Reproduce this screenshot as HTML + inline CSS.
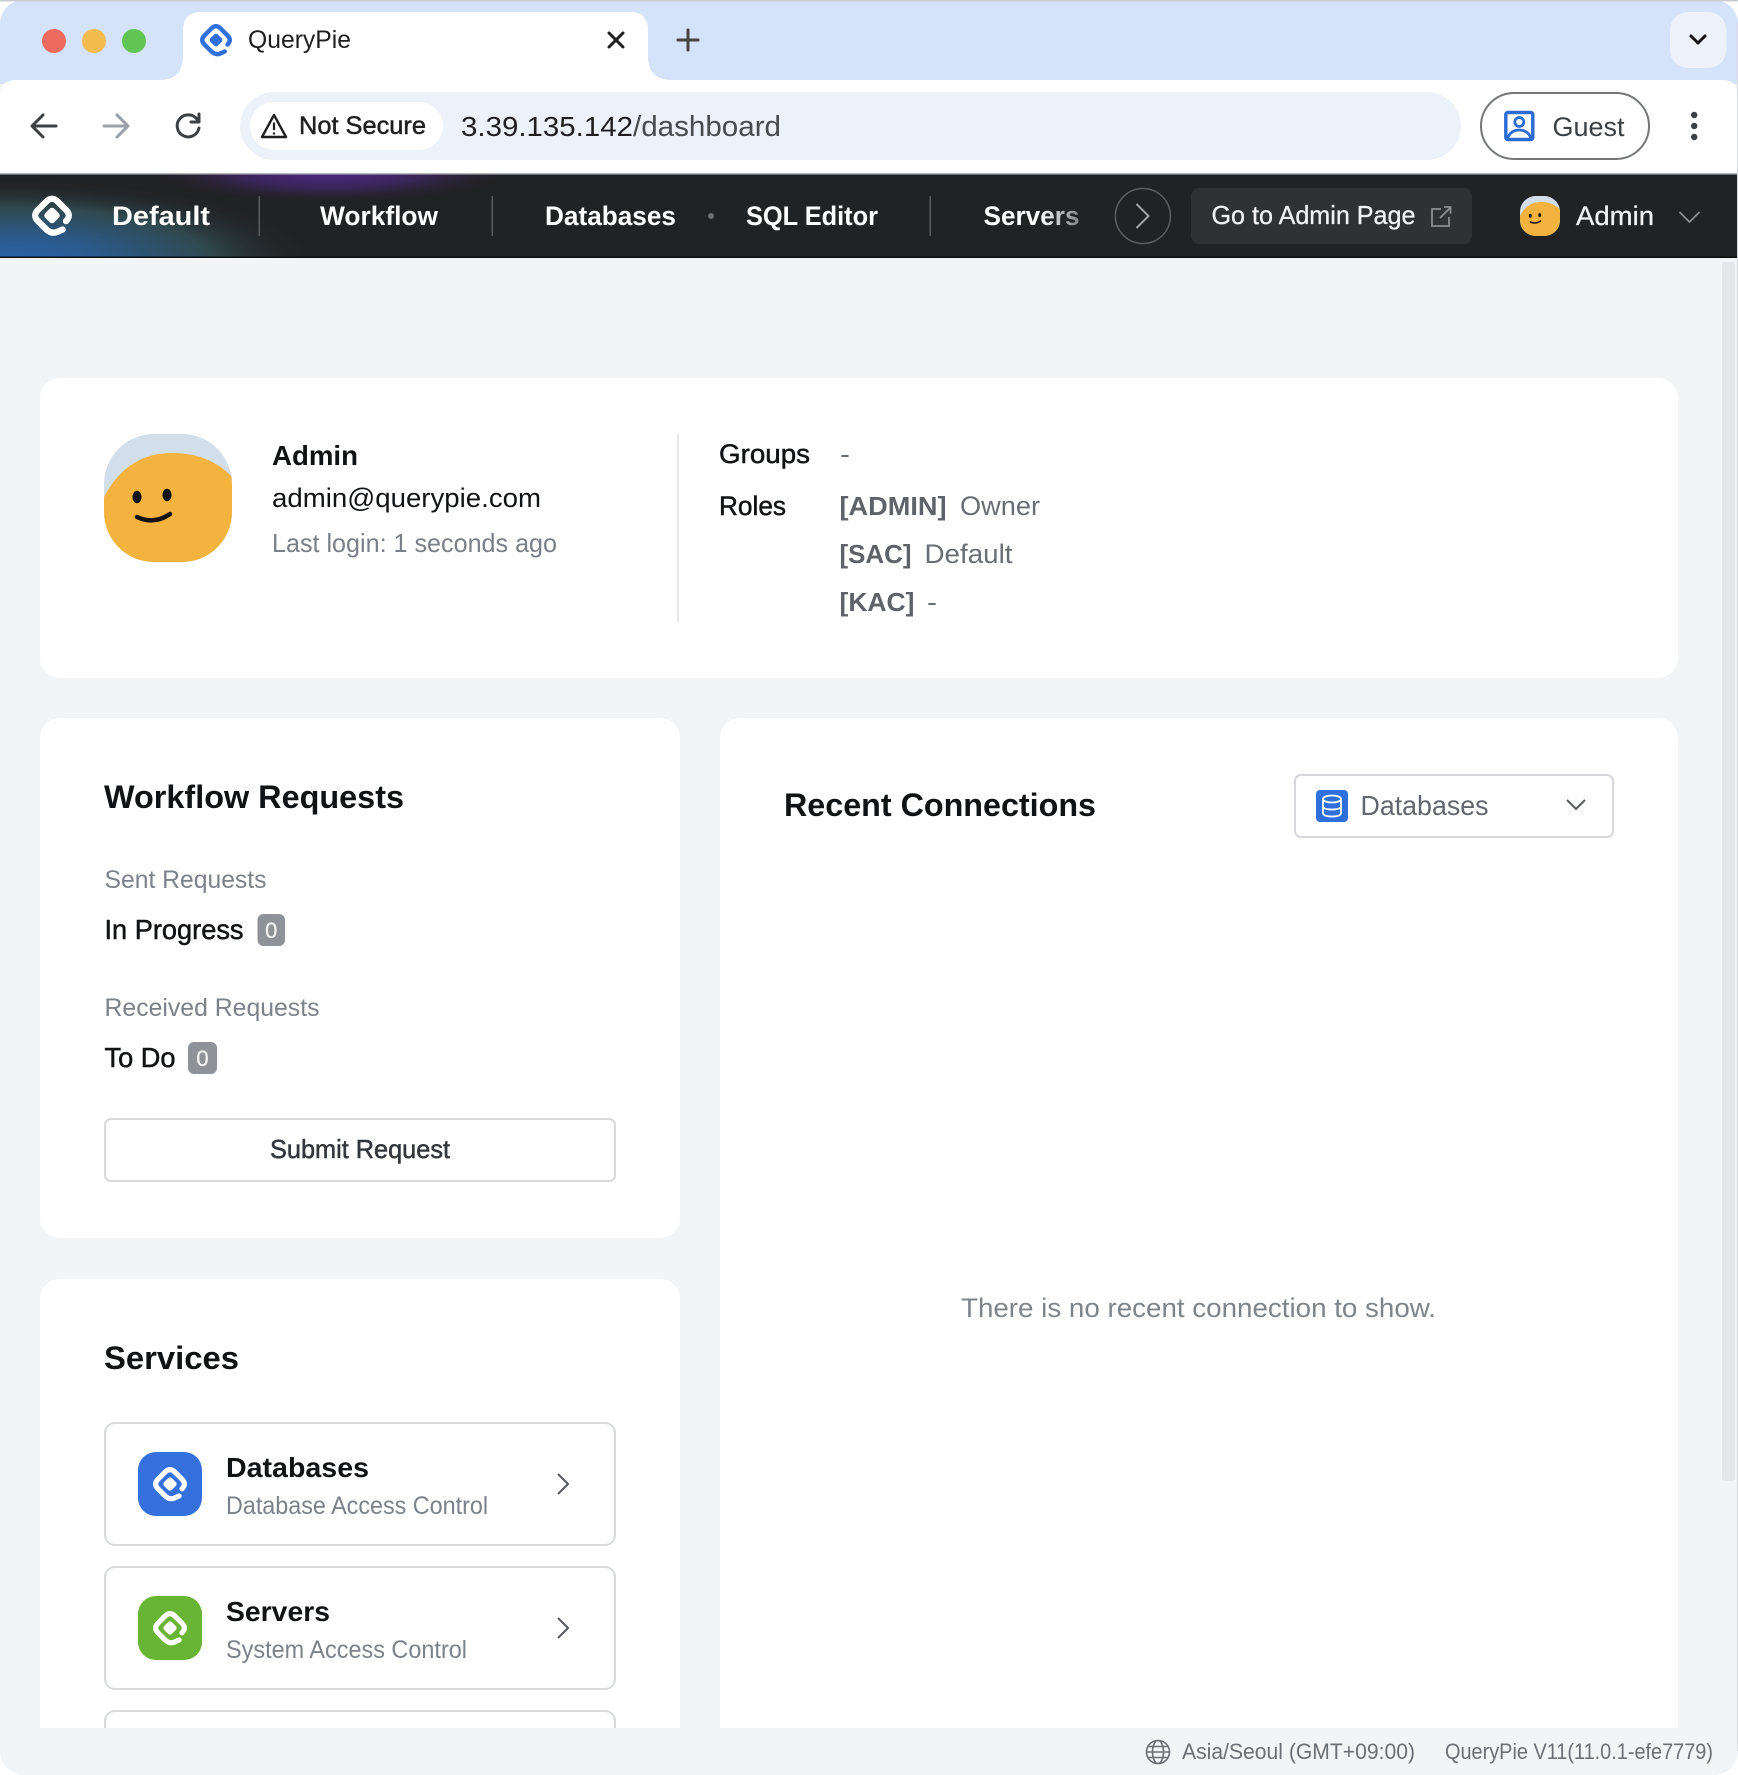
<!DOCTYPE html>
<html lang="en">
<head>
<meta charset="utf-8">
<title>QueryPie</title>
<style>
html,body{margin:0;padding:0;background:#fff;width:1738px;height:1775px;overflow:hidden}
svg{display:block}
text{font-family:"Liberation Sans",sans-serif;fill:currentColor;white-space:pre}
.m{stroke:currentColor;stroke-width:.5}
.b{font-weight:700}
.k{color:#111214}
.g{color:#7d8288}
.w{color:#fff}
</style>
</head>
<body>
<svg xmlns="http://www.w3.org/2000/svg" width="1738" height="1775" viewBox="0 0 1738 1775">
<defs>
  <path id="logo" fill="none" stroke-linecap="round" stroke-linejoin="round" d="M12.5 5Q17.5 0 12.5-5L5-12.5Q0-17.5-5-12.5L-12.5-5Q-17.5 0-12.5 5L-5 12.5Q0 17 5 14.500L9.500 12.500"/>
  <rect id="logoc" x="-5.750" y="-5.750" width="11.500" height="11.500" rx="3" transform="rotate(45)"/>
  <clipPath id="ava"><rect x="104" y="434" width="128" height="128" rx="50" ry="50"/></clipPath>
  <g id="avatar">
    <g clip-path="url(#ava)">
      <rect x="104" y="434" width="128" height="128" fill="#d3deeb"/>
      <path d="M104 497C118 470 140 453 172 453C198 453 218 462 232 477V562H104Z" fill="#f4b33f"/>
    </g>
    <ellipse cx="137" cy="497" rx="4.600" ry="6.200" fill="#111"/>
    <ellipse cx="167" cy="495" rx="4.600" ry="6.200" fill="#111"/>
    <path d="M137 517Q154 525 170 514" fill="none" stroke="#111" stroke-width="4.500" stroke-linecap="round"/>
  </g>
  <radialGradient id="navB" gradientUnits="userSpaceOnUse" cx="0" cy="0" r="1" gradientTransform="translate(10 262) scale(310 84)">
    <stop offset="0" stop-color="#2a62ad"/><stop offset=".3" stop-color="#2b5a8c"/><stop offset=".65" stop-color="#30494f"/><stop offset="1" stop-color="#212224" stop-opacity="0"/>
  </radialGradient>
  <radialGradient id="navP" gradientUnits="userSpaceOnUse" cx="0" cy="0" r="1" gradientTransform="translate(330 172) scale(190 32)">
    <stop offset="0" stop-color="#4f2a86"/><stop offset=".5" stop-color="#3a2559"/><stop offset="1" stop-color="#212224" stop-opacity="0"/>
  </radialGradient>
  <linearGradient id="fade" gradientUnits="userSpaceOnUse" x1="1040" y1="0" x2="1082" y2="0">
    <stop offset="0" stop-color="#fff"/><stop offset="1" stop-color="#77797c"/>
  </linearGradient>
  <clipPath id="win"><rect x="0" y="0" width="1738" height="1775" rx="24" ry="24"/></clipPath>
  <clipPath id="main"><rect x="0" y="258" width="1738" height="1470"/></clipPath>
</defs>

<g clip-path="url(#win)">
  <!-- page bg -->
  <rect width="1738" height="1775" fill="#f3f4f6"/>

  <!-- tab strip -->
  <rect width="1738" height="84" fill="#d4e2fa"/>
  <!-- tab -->
  <path d="M159 80Q183 80 183 56V30Q183 12 201 12H630Q648 12 648 30V56Q648 80 672 80Z" fill="#fff"/>
  <circle cx="54" cy="41" r="12" fill="#ec6a5e"/>
  <circle cx="94" cy="41" r="12" fill="#f4bb4f"/>
  <circle cx="134" cy="41" r="12" fill="#61c554"/>
  <g transform="translate(216 40) scale(.92)">
    <use href="#logo" stroke="#2f6fdc" stroke-width="4.800"/>
    <use href="#logoc" fill="#2f6fdc"/>
  </g>
  <text x="248" y="48" font-size="25" textLength="103" lengthAdjust="spacingAndGlyphs" style="color:#1f1f1f">QueryPie</text>
  <path d="M609 33L623 47M623 33L609 47" stroke="#1f1f1f" stroke-width="3" stroke-linecap="round"/>
  <path d="M688 30V50M678 40H698" stroke="#444" stroke-width="3" stroke-linecap="round"/>
  <rect x="1670" y="12" width="56.500" height="56" rx="18" fill="#edf2fa"/>
  <path d="M1691 36L1698 43L1705 36" fill="none" stroke="#111" stroke-width="3" stroke-linecap="round" stroke-linejoin="round"/>

  <!-- toolbar -->
  <path d="M0 174V96Q0 80 16 80H1722Q1738 80 1738 96V174Z" fill="#fff"/>
  <path d="M56 126H33M43 115L32 126L43 137" fill="none" stroke="#3c4043" stroke-width="3" stroke-linecap="round" stroke-linejoin="round"/>
  <path d="M104 126H127M117 115L128 126L117 137" fill="none" stroke="#9aa0a6" stroke-width="3" stroke-linecap="round" stroke-linejoin="round"/>
  <path d="M197.500 120A11 11 0 1 0 199 128" fill="none" stroke="#3c4043" stroke-width="3" stroke-linecap="round"/>
  <path d="M199 114V122H191" fill="none" stroke="#3c4043" stroke-width="3" stroke-linecap="round" stroke-linejoin="round"/>
  <rect x="240" y="92" width="1221" height="68" rx="34" fill="#edf2fa"/>
  <rect x="250" y="102" width="193" height="48" rx="24" fill="#fff"/>
  <path d="M274 115L286 137H262Z" fill="none" stroke="#1f1f1f" stroke-width="2.400" stroke-linejoin="round"/>
  <path d="M274 122.500V130M274 132.500V134.500" stroke="#1f1f1f" stroke-width="2.200"/>
  <text x="299" y="134" font-size="25" textLength="127" lengthAdjust="spacingAndGlyphs" class="m" style="color:#1f1f1f">Not Secure</text>
  <text x="461" y="136" font-size="28" textLength="172" lengthAdjust="spacingAndGlyphs" style="color:#1f1f1f">3.39.135.142</text>
  <text x="633" y="136" font-size="29" textLength="148" lengthAdjust="spacingAndGlyphs" style="color:#474a4f">/dashboard</text>

  <rect x="1481" y="93" width="168" height="66" rx="33" fill="#fff" stroke="#747775" stroke-width="2"/>
  <rect x="1505.800" y="112.500" width="27" height="27" rx="2" fill="none" stroke="#2b6cd4" stroke-width="3.400"/>
  <circle cx="1519.300" cy="122" r="4.500" fill="none" stroke="#2b6cd4" stroke-width="2.800"/>
  <path d="M1507.300 139Q1510.300 130 1519.300 130Q1528.300 130 1531.300 139" fill="none" stroke="#2b6cd4" stroke-width="2.800"/>
  <text x="1552.500" y="136" font-size="27" textLength="72" lengthAdjust="spacingAndGlyphs" style="color:#3c4043">Guest</text>
  <circle cx="1694.200" cy="115" r="3.200" fill="#3c4043"/>
  <circle cx="1694.200" cy="126" r="3.200" fill="#3c4043"/>
  <circle cx="1694.200" cy="137" r="3.200" fill="#3c4043"/>

  <!-- app nav -->
  <rect y="173" width="1738" height="85" fill="#212224"/>
  <rect y="173" width="1738" height="85" fill="url(#navB)"/>
  <rect y="173" width="1738" height="85" fill="url(#navP)"/>
  <rect y="173" width="1738" height="1.500" fill="#b7babd"/>
  <rect y="256.500" width="1738" height="1.500" fill="#0d0d0e"/>
  <g transform="translate(52 215.500) scale(1.12)">
    <use href="#logo" stroke="#fff" stroke-width="5.600"/>
    <use href="#logoc" fill="#fff"/>
  </g>
  <text x="112" y="225" font-size="27" textLength="98" lengthAdjust="spacingAndGlyphs" class="b w">Default</text>
  <rect x="258.500" y="196" width="1.500" height="40" fill="#5a5c5f"/>
  <text x="320" y="225" font-size="27" textLength="118" lengthAdjust="spacingAndGlyphs" class="b w">Workflow</text>
  <rect x="491.500" y="196" width="1.500" height="40" fill="#5a5c5f"/>
  <text x="545" y="225" font-size="27" textLength="131" lengthAdjust="spacingAndGlyphs" class="b w">Databases</text>
  <circle cx="711" cy="216" r="3" fill="#6c6e71"/>
  <text x="746" y="225" font-size="27" textLength="132" lengthAdjust="spacingAndGlyphs" class="b w">SQL Editor</text>
  <rect x="929.500" y="196" width="1.500" height="40" fill="#5a5c5f"/>
  <text x="983.500" y="225" font-size="27" textLength="96" lengthAdjust="spacingAndGlyphs" class="b" style="fill:url(#fade)">Servers</text>
  <circle cx="1142.900" cy="216" r="27.500" fill="none" stroke="#5a5c5f" stroke-width="1.500"/>
  <path d="M1136.500 204L1148.500 216L1136.500 228" fill="none" stroke="#a3a5a8" stroke-width="2"/>
  <rect x="1191" y="188" width="281" height="56" rx="8" fill="#303133"/>
  <text x="1211.500" y="224" font-size="26" textLength="204" lengthAdjust="spacingAndGlyphs" class="m" style="color:#f2f2f2;stroke-width:.3">Go to Admin Page</text>
  <path d="M1441 209H1432V226H1449V217M1440 218L1450 208M1444 207H1450.500V213.500" fill="none" stroke="#8c8e91" stroke-width="1.800"/>
  <use href="#avatar" transform="translate(1520 196) scale(.3125) translate(-104 -434)"/>
  <text x="1576" y="225" font-size="27" textLength="78" lengthAdjust="spacingAndGlyphs" class="m" style="color:#f2f2f2;stroke-width:.3">Admin</text>
  <path d="M1679.500 212L1689.500 222L1699.500 212" fill="none" stroke="#8c8e91" stroke-width="1.800"/>

  <!-- scrollbar -->
  <rect x="1722" y="262" width="13" height="1219" rx="3" fill="#e4e6e9"/>

  <!-- cards -->
  <rect x="40" y="378" width="1638" height="300" rx="20" fill="#fff"/>
  <use href="#avatar"/>
  <text x="272" y="465" font-size="28" textLength="86" lengthAdjust="spacingAndGlyphs" class="b k">Admin</text>
  <text x="272" y="507" font-size="27" textLength="269" lengthAdjust="spacingAndGlyphs" class="k">admin@querypie.com</text>
  <text x="272" y="552" font-size="26" textLength="285" lengthAdjust="spacingAndGlyphs" style="color:#7b8087">Last login: 1 seconds ago</text>
  <rect x="677" y="434" width="2" height="188" fill="#e5e6e8"/>
  <text x="719" y="463" font-size="27" textLength="91" lengthAdjust="spacingAndGlyphs" class="m k">Groups</text>
  <text x="840" y="463" font-size="26" textLength="10" lengthAdjust="spacingAndGlyphs" style="color:#6a6e73">-</text>
  <text x="719" y="515" font-size="27" textLength="67" lengthAdjust="spacingAndGlyphs" class="m k">Roles</text>
  <text x="839.500" y="515" font-size="26" textLength="107" lengthAdjust="spacingAndGlyphs" class="b" style="color:#5f6368">[ADMIN]</text>
  <text x="960" y="515" font-size="27" textLength="80" lengthAdjust="spacingAndGlyphs" style="color:#6a6e73">Owner</text>
  <text x="839.500" y="563" font-size="26" textLength="72" lengthAdjust="spacingAndGlyphs" class="b" style="color:#5f6368">[SAC]</text>
  <text x="924.500" y="563" font-size="27" textLength="88" lengthAdjust="spacingAndGlyphs" style="color:#6a6e73">Default</text>
  <text x="839.500" y="611" font-size="26" textLength="75" lengthAdjust="spacingAndGlyphs" class="b" style="color:#5f6368">[KAC]</text>
  <text x="927" y="611" font-size="26" textLength="10" lengthAdjust="spacingAndGlyphs" style="color:#6a6e73">-</text>

  <!-- workflow -->
  <rect x="40" y="718" width="640" height="520" rx="20" fill="#fff"/>
  <text x="104" y="808" font-size="32" textLength="300" lengthAdjust="spacingAndGlyphs" class="b k">Workflow Requests</text>
  <text x="104.500" y="888" font-size="25" textLength="162" lengthAdjust="spacingAndGlyphs" class="g">Sent Requests</text>
  <text x="104.500" y="939" font-size="28" textLength="139" lengthAdjust="spacingAndGlyphs" class="m k">In Progress</text>
  <rect x="257.500" y="914" width="27.500" height="32" rx="6" fill="#8f9296"/>
  <text x="271.250" y="938" font-size="22" text-anchor="middle" class="m" style="color:#f1f1f1;stroke-width:.3">0</text>
  <text x="104.500" y="1016" font-size="25" textLength="215" lengthAdjust="spacingAndGlyphs" class="g">Received Requests</text>
  <text x="104.500" y="1067" font-size="28" textLength="71" lengthAdjust="spacingAndGlyphs" class="m k">To Do</text>
  <rect x="188" y="1042" width="29" height="32" rx="6" fill="#8f9296"/>
  <text x="202.500" y="1066" font-size="22" text-anchor="middle" class="m" style="color:#f1f1f1;stroke-width:.3">0</text>
  <rect x="105" y="1119" width="510" height="62" rx="6" fill="#fff" stroke="#d8d9db" stroke-width="2"/>
  <text x="270" y="1158" font-size="26" textLength="180" lengthAdjust="spacingAndGlyphs" class="m" style="color:#33363a">Submit Request</text>

  <!-- services -->
  <g clip-path="url(#main)">
    <rect x="40" y="1279" width="640" height="470" rx="20" fill="#fff"/>
    <text x="104" y="1369" font-size="32" textLength="135" lengthAdjust="spacingAndGlyphs" class="b k">Services</text>

    <rect x="105" y="1423" width="510" height="122" rx="10" fill="#fff" stroke="#d8dadc" stroke-width="2"/>
    <rect x="138" y="1452" width="64" height="64" rx="18" fill="#3470de"/>
    <g transform="translate(170 1484) scale(.96)">
      <use href="#logo" stroke="#fff" stroke-width="5.400"/>
      <use href="#logoc" fill="#fff"/>
    </g>
    <text x="226" y="1477" font-size="28" textLength="143" lengthAdjust="spacingAndGlyphs" class="b k">Databases</text>
    <text x="226" y="1514" font-size="25" textLength="262" lengthAdjust="spacingAndGlyphs" class="g">Database Access Control</text>
    <path d="M558 1474L568 1484L558 1494" fill="none" stroke="#55585c" stroke-width="2"/>

    <rect x="105" y="1567" width="510" height="122" rx="10" fill="#fff" stroke="#d8dadc" stroke-width="2"/>
    <rect x="138" y="1596" width="64" height="64" rx="18" fill="#68b536"/>
    <g transform="translate(170 1628) scale(.96)">
      <use href="#logo" stroke="#fff" stroke-width="5.400"/>
      <use href="#logoc" fill="#fff"/>
    </g>
    <text x="226" y="1621" font-size="28" textLength="104" lengthAdjust="spacingAndGlyphs" class="b k">Servers</text>
    <text x="226" y="1658" font-size="25" textLength="241" lengthAdjust="spacingAndGlyphs" class="g">System Access Control</text>
    <path d="M558 1618L568 1628L558 1638" fill="none" stroke="#55585c" stroke-width="2"/>

    <rect x="105" y="1711" width="510" height="40" rx="10" fill="#fff" stroke="#d8dadc" stroke-width="2"/>

    <!-- recent -->
    <rect x="720" y="718" width="958" height="1031" rx="20" fill="#fff"/>
  </g>
  <text x="784" y="816" font-size="32" textLength="312" lengthAdjust="spacingAndGlyphs" class="b k">Recent Connections</text>
  <rect x="1295" y="775" width="318" height="62" rx="6" fill="#fff" stroke="#d5d7da" stroke-width="2"/>
  <rect x="1316" y="790" width="32" height="32" rx="4" fill="#2f6fdc"/>
  <g fill="none" stroke="#fff" stroke-width="1.800">
    <ellipse cx="1332" cy="799" rx="9" ry="3.500"/>
    <path d="M1323 799V813Q1323 816.500 1332 816.500Q1341 816.500 1341 813V799M1323 806Q1323 809.500 1332 809.500Q1341 809.500 1341 806"/>
  </g>
  <text x="1360.500" y="815" font-size="28" textLength="128" lengthAdjust="spacingAndGlyphs" style="color:#63676d">Databases</text>
  <path d="M1567 800L1576 809L1585 800" fill="none" stroke="#55585c" stroke-width="2"/>
  <text x="961" y="1317" font-size="27" textLength="475" lengthAdjust="spacingAndGlyphs" style="color:#7f8489">There is no recent connection to show.</text>

  <!-- footer -->
  <g fill="none" stroke="#6c7075" stroke-width="1.600">
    <circle cx="1158" cy="1752" r="11.500"/>
    <ellipse cx="1158" cy="1752" rx="5.500" ry="11.500"/>
    <path d="M1146.500 1752H1169.500M1148 1746.500H1168M1148 1757.500H1168"/>
  </g>
  <text x="1182" y="1759" font-size="22" textLength="233" lengthAdjust="spacingAndGlyphs" style="color:#6c7075">Asia/Seoul (GMT+09:00)</text>
  <text x="1445" y="1759" font-size="22" textLength="268" lengthAdjust="spacingAndGlyphs" style="color:#6c7075">QueryPie V11(11.0.1-efe7779)</text>
</g>
<rect y="0" width="1738" height="1.500" fill="#c9ccd1"/>
<rect x="1737" y="24" width="1" height="1727" fill="#d9dbdf"/>
</svg>
</body>
</html>
